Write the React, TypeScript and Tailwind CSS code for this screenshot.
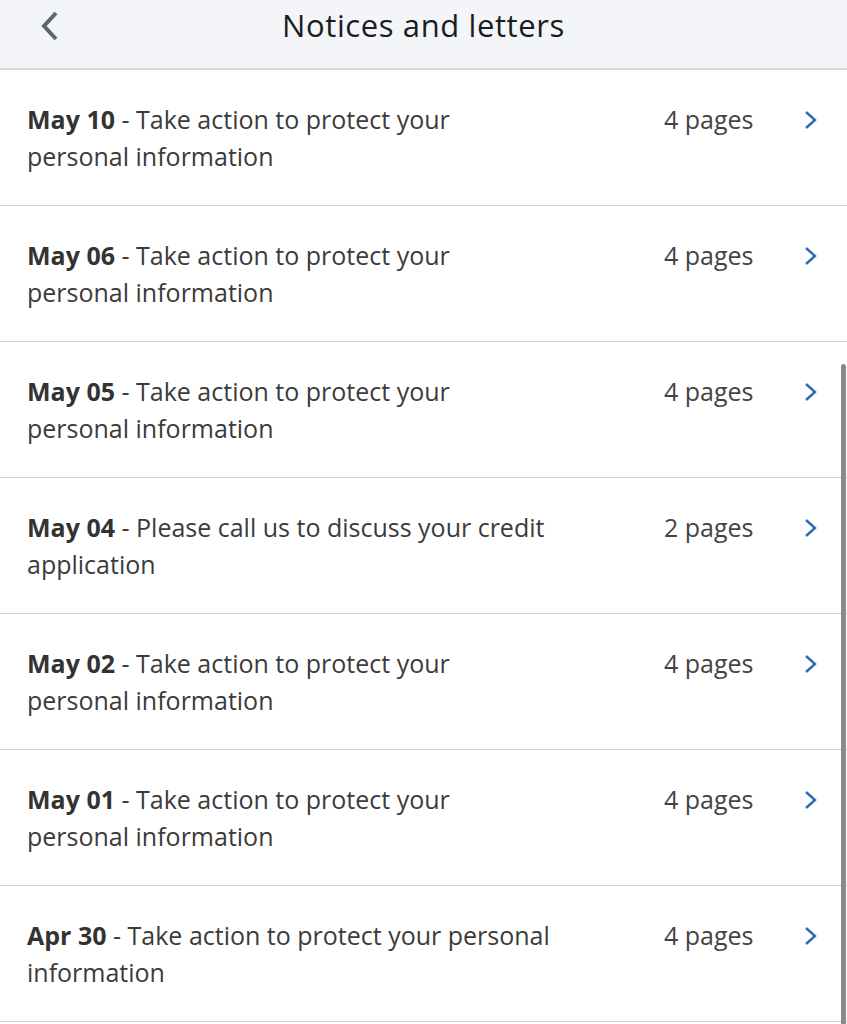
import React from "react";

const items = [
  { date: "May 10", text: "Take action to protect your personal information", pages: 4 },
  { date: "May 06", text: "Take action to protect your personal information", pages: 4 },
  { date: "May 05", text: "Take action to protect your personal information", pages: 4 },
  { date: "May 04", text: "Please call us to discuss your credit application", pages: 2 },
  { date: "May 02", text: "Take action to protect your personal information", pages: 4 },
  { date: "May 01", text: "Take action to protect your personal information", pages: 4 },
  { date: "Apr 30", text: "Take action to protect your personal information", pages: 4 },
];

export default function App() {
  return (
    <div
      className="relative w-[847px] h-[1024px] overflow-hidden bg-white"
      style={{ fontFamily: '"Open Sans", "Noto Sans", sans-serif' }}
    >
      <header className="relative flex h-[70px] items-center justify-center border-b-2 border-[#d6d7da] bg-[#f3f5f8]">
        <button className="absolute left-[38px] top-[11px] flex h-[30px] w-[24px] items-center justify-center">
          <svg width="22" height="30" viewBox="0 0 22 30" fill="none">
            <path d="M17 2 L5 15 L17 28" stroke="#5c6670" strokeWidth="4" strokeLinecap="butt" strokeLinejoin="miter" />
          </svg>
        </button>
        <h1 className="-mt-[18px] text-[31px] font-medium tracking-[0.6px] text-[#1b1c1e]">Notices and letters</h1>
      </header>
      <ul>
        {items.map((it, i) => (
          <li
            key={i}
            className="flex items-start border-b border-[#cfd0d2] pl-[27px] pr-[29px] pt-[31px] pb-[30px]"
          >
            <div className="w-[526px] text-[25px] leading-[37px] text-[#3b3b3b]">
              <span className="font-bold text-[#333]">{it.date}</span> - {it.text}
            </div>
            <div className="ml-[111px] text-[25px] leading-[37px] text-[#444]">{it.pages} pages</div>
            <div className="ml-auto flex h-[37px] items-center">
              <svg width="14" height="20" viewBox="0 0 14 20" fill="none">
                <path d="M2 2 L11 10 L2 18" stroke="#2f68b3" strokeWidth="2.4" />
              </svg>
            </div>
          </li>
        ))}
      </ul>
      <div className="absolute right-[1px] top-[364px] h-[700px] w-[5px] rounded-full bg-[#8a8a8a]" />
    </div>
  );
}
